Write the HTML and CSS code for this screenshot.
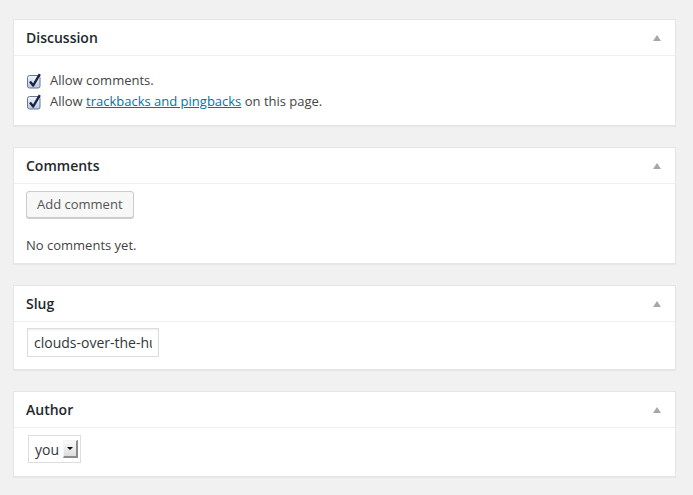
FILE: index.html
```html
<!DOCTYPE html>
<html lang="en">
<head>
    <meta charset="UTF-8">
    <title>Page boxes</title>
    <link rel="stylesheet" href="styles.css">
</head>
<body>
    <div class="wrap">
        <!-- Discussion -->
        <div class="postbox">
            <div class="hndle"><span>Discussion</span><span class="toggle"></span></div>
            <div class="inside discussion">
                <label class="check-row">
                    <svg class="checkbox" width="16" height="16" viewBox="0 0 16 16"><defs><linearGradient id="cb1" x1="0" y1="0" x2="0" y2="1"><stop offset="0" stop-color="#f2f6fc"/><stop offset="1" stop-color="#b7cbe6"/></linearGradient></defs><rect x="1.5" y="2.5" width="12.5" height="12.5" rx="2" fill="url(#cb1)" stroke="#6a7690"/><path d="M4 8.5 L7.2 12.5 L13.8 1.2" fill="none" stroke="#1c233f" stroke-width="2.4" stroke-linejoin="round"/></svg>
                    <span>Allow comments.</span>
                </label>
                <label class="check-row">
                    <svg class="checkbox" width="16" height="16" viewBox="0 0 16 16"><defs><linearGradient id="cb2" x1="0" y1="0" x2="0" y2="1"><stop offset="0" stop-color="#f2f6fc"/><stop offset="1" stop-color="#b7cbe6"/></linearGradient></defs><rect x="1.5" y="2.5" width="12.5" height="12.5" rx="2" fill="url(#cb2)" stroke="#6a7690"/><path d="M4 8.5 L7.2 12.5 L13.8 1.2" fill="none" stroke="#1c233f" stroke-width="2.4" stroke-linejoin="round"/></svg>
                    <span>Allow <a href="#">trackbacks and pingbacks</a> on this page.</span>
                </label>
            </div>
        </div>

        <!-- Comments -->
        <div class="postbox">
            <div class="hndle"><span>Comments</span><span class="toggle"></span></div>
            <div class="inside comments">
                <button class="button" type="button">Add comment</button>
                <p class="no-comments">No comments yet.</p>
            </div>
        </div>

        <!-- Slug -->
        <div class="postbox">
            <div class="hndle"><span>Slug</span><span class="toggle"></span></div>
            <div class="inside slug">
                <input class="slug-input" type="text" value="clouds-over-the-hudson">
            </div>
        </div>

        <!-- Author -->
        <div class="postbox">
            <div class="hndle"><span>Author</span><span class="toggle"></span></div>
            <div class="inside author">
                <div class="select-box">
                    <span>you</span>
                    <span class="select-arrow"></span>
                </div>
            </div>
        </div>
    </div>
</body>
</html>
```

FILE: styles.css
```css
body {
    margin: 0;
    background-color: #f1f1f1;
    font-family: "Open Sans", "DejaVu Sans", sans-serif;
    font-size: 13px;
    color: #444444;
}
.wrap {
    padding: 19px 17px 0 13px;
}
.postbox {
    background-color: #ffffff;
    border: 1px solid #e5e5e5;
    box-shadow: 0 1px 1px rgba(0, 0, 0, 0.04);
    margin-bottom: 21px;
}
.hndle {
    display: flex;
    align-items: center;
    justify-content: space-between;
    padding: 8px 12px;
    font-size: 14px;
    line-height: 19px;
    font-weight: 600;
    color: #23282d;
    border-bottom: 1px solid #eeeeee;
}
.toggle {
    width: 0;
    height: 0;
    border-left: 4px solid transparent;
    border-right: 4px solid transparent;
    border-bottom: 6px solid #a7a7a7;
    margin-right: 2px;
}
.inside {
    padding: 0 12px;
}
.discussion {
    padding-top: 14px;
    padding-bottom: 13px;
}
.check-row {
    display: flex;
    align-items: center;
    height: 21px;
    line-height: 21px;
}
.checkbox {
    margin-right: 8px;
    flex-shrink: 0;
}
.check-row a {
    color: #0074a2;
    text-decoration: underline;
}
.comments {
    padding-top: 7px;
    padding-bottom: 8px;
}
.button {
    display: block;
    font-family: "Open Sans", "DejaVu Sans", sans-serif;
    font-size: 13px;
    line-height: 25px;
    height: 27px;
    padding: 0 10px;
    color: #555555;
    background-color: #f7f7f7;
    border: 1px solid #cccccc;
    border-radius: 3px;
    box-shadow: 0 1px 0 #cccccc;
    margin: 0;
}
.no-comments {
    margin: 17px 0 0 0;
    line-height: 20px;
}
.slug {
    padding-top: 6px;
    padding-bottom: 12px;
}
.author {
    padding-top: 7px;
    padding-bottom: 13px;
}
.slug-input {
    display: block;
    box-sizing: border-box;
    width: 132px;
    height: 29px;
    margin: 0 0 0 1px;
    padding: 0 6px;
    font-family: "Open Sans", "DejaVu Sans", sans-serif;
    font-size: 14px;
    color: #32373c;
    border: 1px solid #dddddd;
    box-shadow: inset 0 1px 2px rgba(0, 0, 0, 0.07);
    outline: none;
}
.select-box {
    display: flex;
    align-items: center;
    box-sizing: border-box;
    width: 53px;
    height: 28px;
    margin-left: 2px;
    padding-left: 6px;
    border: 1px solid #dddddd;
    background-color: #ffffff;
    font-size: 14px;
    color: #32373c;
}
.select-arrow {
    display: flex;
    align-items: center;
    justify-content: center;
    box-sizing: border-box;
    width: 15px;
    height: 18px;
    margin-left: auto;
    margin-right: 2px;
    background: linear-gradient(#fafafa, #dcdcdc);
    border-top: 1px solid #f4f4f4;
    border-left: 1px solid #f4f4f4;
    border-right: 2px solid #8a8a8a;
    border-bottom: 2px solid #8a8a8a;
}
.select-arrow::after {
    content: "";
    width: 0;
    height: 0;
    border-left: 3px solid transparent;
    border-right: 3px solid transparent;
    border-top: 3px solid #111111;
}
```
